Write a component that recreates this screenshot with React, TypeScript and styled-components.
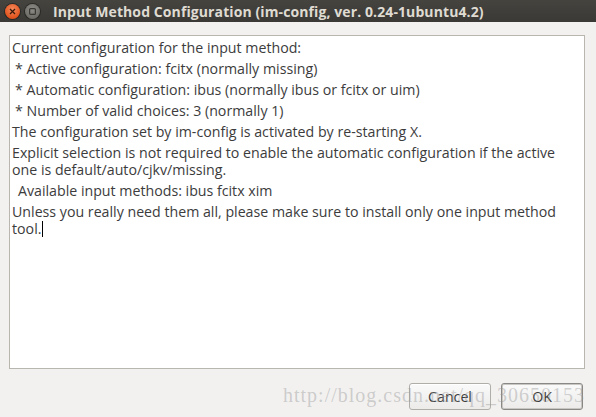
import React from "react";
import styled, { createGlobalStyle } from "styled-components";

const Global = createGlobalStyle`
  html, body { margin: 0; padding: 0; background: #f2f1f0; }
  body { width: 596px; height: 417px; overflow: hidden; }
  * { box-sizing: border-box; }
`;

const Window = styled.div`
  width: 596px;
  height: 417px;
  display: flex;
  flex-direction: column;
  background: #f2f1f0;
  font-family: "Open Sans", "Noto Sans", sans-serif;
  position: relative;
`;

const TitleBar = styled.div`
  height: 22px;
  flex: none;
  display: flex;
  align-items: center;
  padding-left: 5px;
  background: linear-gradient(#45443f, #3a3935);
  gap: 5px;
`;

const CircleButton = styled.div<{ $kind: "close" | "min" }>`
  width: 15px;
  height: 15px;
  border-radius: 50%;
  display: flex;
  align-items: center;
  justify-content: center;
  background: ${(p) =>
    p.$kind === "close"
      ? "radial-gradient(circle at 50% 35%, #f58a5c, #e2531d 70%, #c8440f)"
      : "radial-gradient(circle at 50% 35%, #8c8b86, #6e6d68 70%, #5e5d59)"};
  box-shadow: 0 0 0 1px rgba(0, 0, 0, 0.35);
`;

const Title = styled.div`
  margin-left: 8px;
  color: #dfdbd2;
  font-family: "Open Sans", sans-serif;
  font-weight: 700;
  font-size: 14px;
  letter-spacing: 0.1px;
  white-space: nowrap;
`;

const Body = styled.div`
  flex: 1;
  display: flex;
  flex-direction: column;
  padding: 13px 11px 7px 9px;
`;

const TextArea = styled.div`
  flex: 1;
  background: #ffffff;
  border: 1px solid #b9b6b0;
  padding: 0 10px 0 2px;
  color: #3c3c3c;
  font-size: 14.2px;
  line-height: 17px;
`;

const Para = styled.div<{ $indent?: number }>`
  margin-top: 4px;
  padding-left: ${(p) => p.$indent ?? 0}px;
  &:first-child { margin-top: 3px; }
`;

const Cursor = styled.span`
  display: inline-block;
  width: 1px;
  height: 16px;
  background: #000;
  vertical-align: -3px;
  margin-left: 1px;
`;

const ButtonRow = styled.div`
  display: flex;
  justify-content: flex-end;
  gap: 10px;
  margin-top: 14px;
  margin-right: 2px;
`;

const Button = styled.div<{ $default?: boolean }>`
  width: 82px;
  height: 27px;
  display: flex;
  align-items: center;
  justify-content: center;
  border-radius: 3px;
  font-size: 14.2px;
  color: #3c3c3c;
  background: linear-gradient(#fafafa, #ecebea);
  border: 1px solid ${(p) => (p.$default ? "#8a8884" : "#b0aea9")};
  box-shadow: ${(p) =>
    p.$default ? "inset 0 0 0 1px #c9c7c3" : "inset 0 1px 0 #ffffff"};
`;

const Watermark = styled.div`
  position: absolute;
  left: 283px;
  top: 384px;
  font-family: "Liberation Serif", serif;
  font-size: 20px;
  color: rgba(150, 150, 150, 0.42);
  letter-spacing: 1px;
  pointer-events: none;
  white-space: nowrap;
  z-index: 2;
`;

export default function App() {
  return (
    <Window>
      <Global />
      <TitleBar>
        <CircleButton $kind="close">
          <svg width="7" height="7" viewBox="0 0 7 7">
            <path d="M1 1 L6 6 M6 1 L1 6" stroke="#3b1a0c" strokeWidth="1.3" />
          </svg>
        </CircleButton>
        <CircleButton $kind="min">
          <svg width="7" height="7" viewBox="0 0 7 7">
            <rect x="0.6" y="0.6" width="5.8" height="5.8" rx="1" fill="none" stroke="#3a3935" strokeWidth="1.2" />
          </svg>
        </CircleButton>
        <Title>Input Method Configuration (im-config, ver. 0.24-1ubuntu4.2)</Title>
      </TitleBar>
      <Body>
        <TextArea>
          <Para>Current configuration for the input method:</Para>
          <Para $indent={3}>* Active configuration: fcitx (normally missing)</Para>
          <Para $indent={3}>* Automatic configuration: ibus (normally ibus or fcitx or uim)</Para>
          <Para $indent={3}>* Number of valid choices: 3 (normally 1)</Para>
          <Para>The configuration set by im-config is activated by re-starting X.</Para>
          <Para>
            Explicit selection is not required to enable the automatic configuration if the active
            one is default/auto/cjkv/missing.
          </Para>
          <Para $indent={6}>Available input methods: ibus fcitx xim</Para>
          <Para>
            Unless you really need them all, please make sure to install only one input method
            tool.<Cursor />
          </Para>
        </TextArea>
        <ButtonRow>
          <Button>Cancel</Button>
          <Button $default>OK</Button>
        </ButtonRow>
      </Body>
      <Watermark>http://blog.csdn.net/qq_30650153</Watermark>
    </Window>
  );
}
